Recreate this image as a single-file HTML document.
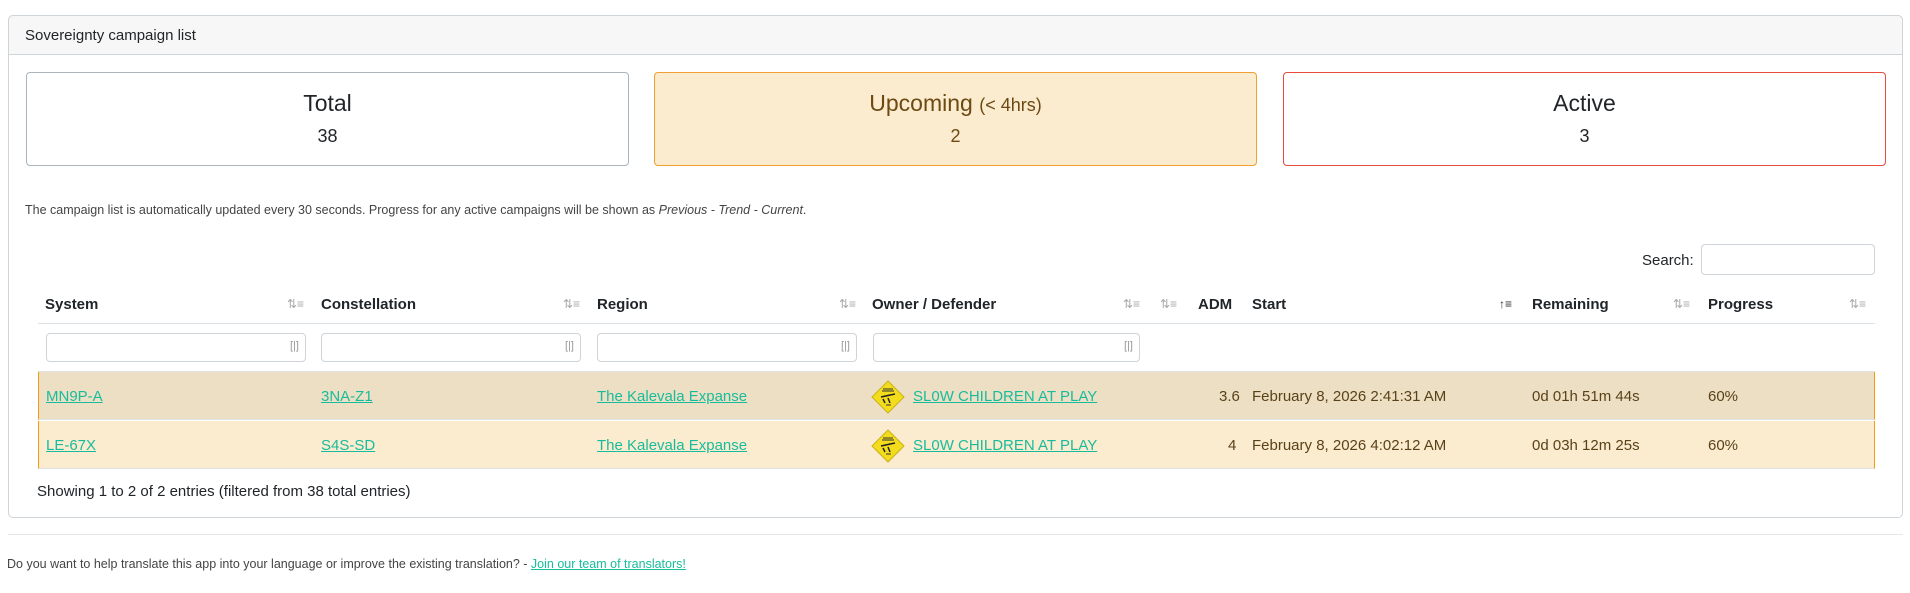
<!DOCTYPE html>
<html><head><meta charset="utf-8"><style>
*{box-sizing:border-box;margin:0;padding:0}
body{width:1910px;height:593px;background:#fff;font-family:"Liberation Sans",sans-serif;color:#212529;position:relative;overflow:hidden;font-size:15px}
.a{position:absolute}
.card{left:8px;top:15px;width:1895px;height:503px;border:1px solid #cfd4d8;border-radius:5px}
.hdr{left:8px;top:15px;width:1895px;height:40px;background:#f7f7f7;border:1px solid #cfd4d8;border-radius:5px 5px 0 0}
.box{top:72px;height:94px;border:1px solid #a9b4bc;border-radius:4px;text-align:center}
.box .t{font-size:23px;margin-top:17px}
.box .n{font-size:18px;margin-top:9px}
a{color:#18bc9c;text-decoration:underline}
.th{top:296px;font-weight:bold;font-size:15px}
.si{top:297px;color:#aaa;font-size:12px}
.inp{top:333px;height:29px;border:1px solid #ced4da;border-radius:4px;background:#fff}
.inp span{position:absolute;right:6px;top:6px;color:#999;font-size:11px}
.row{left:38px;width:1837px;height:48px;border-left:1px solid #f39c12;border-right:1px solid #f39c12;border-bottom:1px solid #dde2e6}
.c{font-size:15px;color:#5a4218}
</style></head><body>
<div class="a card"></div>
<div class="a hdr"></div>
<div class="a" style="left:25px;top:27px;font-size:15px">Sovereignty campaign list</div>

<div class="a box" style="left:26px;width:603px"><div class="t">Total</div><div class="n">38</div></div>
<div class="a box" style="left:654px;width:603px;background:#fbebcf;border-color:#f0a030;color:#6c4a12"><div class="t">Upcoming <span style="font-size:18px">(&lt; 4hrs)</span></div><div class="n">2</div></div>
<div class="a box" style="left:1283px;width:603px;border-color:#e74c3c"><div class="t">Active</div><div class="n">3</div></div>

<div class="a" style="left:25px;top:203px;font-size:12.5px;color:#444">The campaign list is automatically updated every 30 seconds. Progress for any active campaigns will be shown as <i>Previous - Trend - Current</i>.</div>

<div class="a" style="left:1642px;top:252px;font-size:15px">Search:</div>
<div class="a" style="left:1701px;top:244px;width:174px;height:31px;border:1px solid #ced4da;border-radius:4px"></div>

<div class="a th" style="left:45px">System</div><div class="a si" style="left:287px">⇅≡</div>
<div class="a th" style="left:321px">Constellation</div><div class="a si" style="left:563px">⇅≡</div>
<div class="a th" style="left:597px">Region</div><div class="a si" style="left:839px">⇅≡</div>
<div class="a th" style="left:872px">Owner / Defender</div><div class="a si" style="left:1123px">⇅≡</div>
<div class="a si" style="left:1160px">⇅≡</div>
<div class="a th" style="left:1198px">ADM</div>
<div class="a th" style="left:1252px">Start</div><div class="a si" style="left:1499px;color:#333">↑≡</div>
<div class="a th" style="left:1532px">Remaining</div><div class="a si" style="left:1673px">⇅≡</div>
<div class="a th" style="left:1708px">Progress</div><div class="a si" style="left:1849px">⇅≡</div>
<div class="a" style="left:38px;top:323px;width:1837px;height:1px;background:#dde2e6"></div>

<div class="a inp" style="left:46px;width:260px"><span>[|]</span></div>
<div class="a inp" style="left:321px;width:260px"><span>[|]</span></div>
<div class="a inp" style="left:597px;width:260px"><span>[|]</span></div>
<div class="a inp" style="left:873px;width:267px"><span>[|]</span></div>

<div class="a" style="left:38px;top:371px;width:1837px;height:1px;background:#dde2e6"></div>
<div class="a row" style="top:372px;background:#eddfc3"></div>
<div class="a row" style="top:421px;background:#fbebcf"></div>

<div class="a" style="left:0;top:388px;width:1910px">
<a class="a" style="left:46px">MN9P-A</a><a class="a" style="left:321px">3NA-Z1</a><a class="a" style="left:597px">The Kalevala Expanse</a>
<svg class="a" style="left:871px;top:-8px" width="34" height="34" viewBox="0 0 34 34"><polygon points="17,1 33,17 17,33 1,17" fill="#f3dc1c" stroke="#c9b21a"/><path d="M10 17 L24 14 M12 19 L14 23 M17 18 L19 23" stroke="#222" stroke-width="1.5"/><path d="M12 9h10M11 11h12M15 25h5" stroke="#333" stroke-width="1"/></svg>
<a class="a" style="left:913px">SL0W CHILDREN AT PLAY</a>
<span class="a c" style="left:1219px">3.6</span><span class="a c" style="left:1252px">February 8, 2026 2:41:31 AM</span><span class="a c" style="left:1532px">0d 01h 51m 44s</span><span class="a c" style="left:1708px">60%</span>
</div>
<div class="a" style="left:0;top:437px;width:1910px">
<a class="a" style="left:46px">LE-67X</a><a class="a" style="left:321px">S4S-SD</a><a class="a" style="left:597px">The Kalevala Expanse</a>
<svg class="a" style="left:871px;top:-8px" width="34" height="34" viewBox="0 0 34 34"><polygon points="17,1 33,17 17,33 1,17" fill="#f3dc1c" stroke="#c9b21a"/><path d="M10 17 L24 14 M12 19 L14 23 M17 18 L19 23" stroke="#222" stroke-width="1.5"/><path d="M12 9h10M11 11h12M15 25h5" stroke="#333" stroke-width="1"/></svg>
<a class="a" style="left:913px">SL0W CHILDREN AT PLAY</a>
<span class="a c" style="left:1228px">4</span><span class="a c" style="left:1252px">February 8, 2026 4:02:12 AM</span><span class="a c" style="left:1532px">0d 03h 12m 25s</span><span class="a c" style="left:1708px">60%</span>
</div>

<div class="a" style="left:37px;top:483px;font-size:15px">Showing 1 to 2 of 2 entries (filtered from 38 total entries)</div>
<div class="a" style="left:8px;top:534px;width:1895px;height:1px;background:#e5e8ea"></div>
<div class="a" style="left:7px;top:557px;font-size:12.5px;color:#444">Do you want to help translate this app into your language or improve the existing translation? - <a>Join our team of translators!</a></div>
</body></html>
